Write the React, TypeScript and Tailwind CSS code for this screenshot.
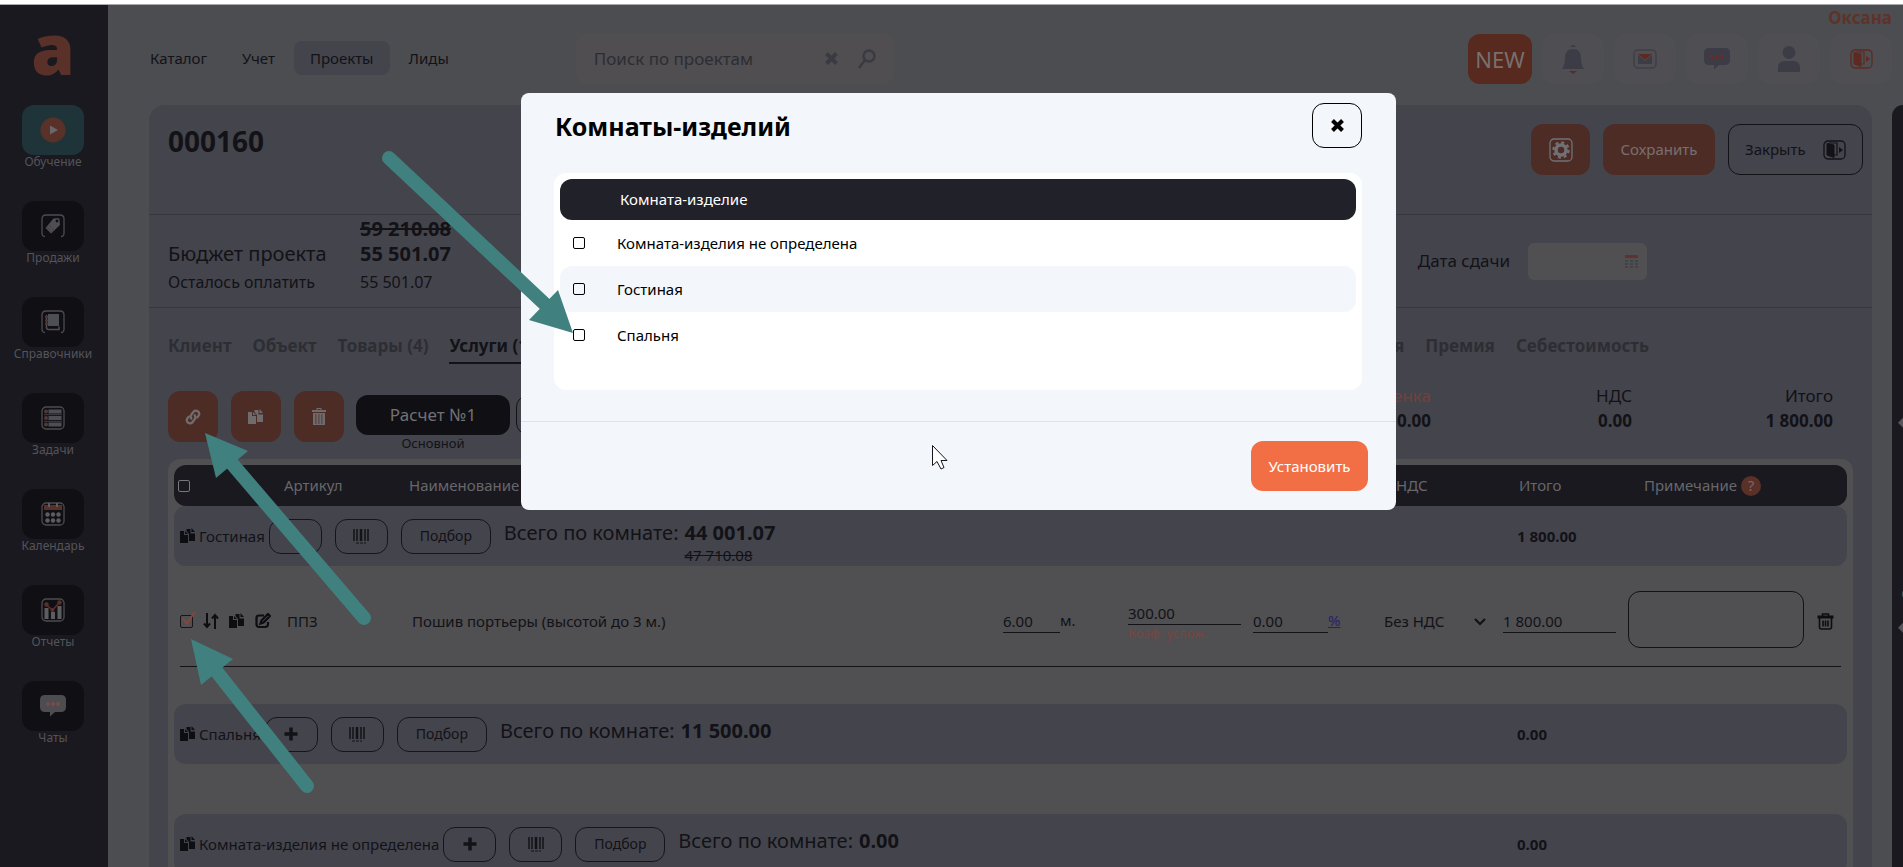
import type { ReactNode } from "react";

type RoomRowProps = {
  id: string;
  name: string;
  sum: string;
  oldSum?: string;
  total: string;
};

const tabsLeft = ["Клиент", "Объект", "Товары (4)"];
const tabsRight = ["Рекламация", "Премия", "Себестоимость"];
const rooms = ["Комната-изделия не определена", "Гостиная", "Спальня"];

function Frame({ children, className }: { children: ReactNode; className?: string }) {
  return (
    <svg width="24" height="24" viewBox="0 0 24 24" fill="none" className={className}>
      <rect x="1" y="1" width="22" height="22" rx="4" stroke="#4c4c50" strokeWidth="1.3" />
      {children}
    </svg>
  );
}

function PlayIcon() {
  return (
    <svg width="26" height="26" viewBox="0 0 26 26">
      <circle cx="13" cy="13" r="12.5" fill="#5a3129" />
      <path d="M10 8.5v9l8-4.5z" fill="#68686c" />
    </svg>
  );
}

function TagIcon() {
  return (
    <svg width="24" height="24" viewBox="0 0 24 24" fill="none">
      <path d="M4 22.5Q1 22.5 1 19V5Q1 1 5 1h14q4 0 4 4v14q0 3.500-3 3.500" stroke="#4c4c50" strokeWidth="1.300" />
      <path d="M12.500 4.500 17.500 4l1 1.500.5 5.500-9 8.500L4.500 14z" fill="#4e4e56" />
      <path d="m6 13 5 5.500M8 11l5 5.500" stroke="#503a3a" strokeWidth="1" />
      <circle cx="16" cy="7" r="1.400" fill="#101014" />
    </svg>
  );
}

function BookIcon() {
  return (
    <svg width="24" height="24" viewBox="0 0 24 24" fill="none">
      <path d="M4 22.500Q1 22.500 1 19V5Q1 1 5 1h14q4 0 4 4v14q0 3.500-3 3.500" stroke="#4c4c50" strokeWidth="1.300" />
      <path d="M7 4h11v12H7z" fill="#4e4e56" />
      <path d="M5.500 5v12.500q0 2 2 2H18V16.500" stroke="#4e4e56" strokeWidth="1.500" />
      <path d="M4 7h3M4 10.500h3M4 14h3" stroke="#5a3129" strokeWidth="2" />
    </svg>
  );
}

function TasksIcon() {
  return (
    <Frame>
      <path d="M7.500 3.500h13v4h-13zM7.500 10h13v4h-13zM7.500 16.500h13v4h-13z" fill="#4e4e56" />
      <path d="M3 8.700h18M3 15.300h18" stroke="#4c4c50" strokeWidth=".8" />
      <g fill="#503a3a">
        <circle cx="5" cy="5.500" r="2" /><circle cx="5" cy="12" r="2" /><circle cx="5" cy="18.500" r="2" />
      </g>
    </Frame>
  );
}

function CalendarIcon() {
  return (
    <Frame>
      <path d="M3 3h18v5H3z" fill="#5a3129" />
      <path d="M8 1v4M16 1v4" stroke="#5c5c62" strokeWidth="2" />
      <g fill="#5c5c62">
        <circle cx="6.500" cy="12.500" r="2.200" /><circle cx="12" cy="12.500" r="2.200" /><circle cx="17.500" cy="12.500" r="2.200" />
        <circle cx="6.500" cy="18.500" r="2.200" /><circle cx="12" cy="18.500" r="2.200" /><circle cx="17.500" cy="18.500" r="2.200" />
      </g>
    </Frame>
  );
}

function ReportsIcon() {
  return (
    <Frame>
      <path d="M3.500 10h4v11h-4zM10 14h4v7h-4zM16.500 8h4v13h-4z" fill="#5c5c62" />
      <path d="m5.500 7 6 5 6.500-7" stroke="#5a3129" strokeWidth="1.500" />
      <g fill="#5a3129">
        <circle cx="5.500" cy="6.500" r="2.200" /><circle cx="11.500" cy="12" r="2" /><circle cx="18.500" cy="4.500" r="2.200" />
      </g>
    </Frame>
  );
}

function ChatIcon({ body, dots }: { body: string; dots: string }) {
  return (
    <svg width="26" height="22" viewBox="0 0 26 22">
      <path d="M5 0h16q5 0 5 5v7q0 5-5 5h-6l-5 4.500V17H5q-5 0-5-5V5q0-5 5-5z" fill={body} />
      <g fill={dots}>
        <circle cx="8" cy="9" r="1.900" /><circle cx="13" cy="9" r="1.900" /><circle cx="18" cy="9" r="1.900" />
      </g>
    </svg>
  );
}

function CopyIcon() {
  return (
    <svg width="16" height="16" viewBox="0 0 16 16" fill="currentColor" className="shrink-0">
      <path d="M0 3h4v4h4v8H0z" /><path d="M5 3 8 6H5z" />
      <path d="M6.500 1h4v4.500H15V13H9V6L6.500 3z" /><path d="M11.500 0 15 4h-3.500z" />
    </svg>
  );
}

function TrashIcon() {
  return (
    <svg width="17" height="17" viewBox="0 0 17 17" fill="none" stroke="currentColor">
      <path d="M.5 4h16" strokeWidth="3" /><path d="M5.500 3V1h6v2" strokeWidth="1.500" />
      <path d="M2.500 5v9q0 2 2 2h8q2 0 2-2V5M6 7.500v6M8.500 7.500v6M11 7.500v6" strokeWidth="1.600" />
    </svg>
  );
}

function BinIcon() {
  return (
    <svg width="14" height="17" viewBox="0 0 14 17" fill="currentColor">
      <path d="M0 2h4.500V0h5v2H14v2H0zM5.500 1v1h3V1z" fillRule="evenodd" />
      <path d="M1 5h12v12H1zM3.500 6v10h.8V6zm3 0v10h.8V6zm3 0v10h.8V6z" fillRule="evenodd" />
    </svg>
  );
}

function DoorIcon() {
  return (
    <svg width="23" height="20" viewBox="0 0 23 20" fill="none" stroke="currentColor">
      <rect x="1" y="1" width="21" height="18" rx="4" strokeWidth="1.300" />
      <path d="M4 3.500 11 5v12.500L4 15z" fill="currentColor" />
      <path d="M6 3h8v12h-3" strokeWidth="1.200" />
      <path d="M16 7v6l4-3z" fill="currentColor" stroke="none" />
    </svg>
  );
}

function LinkIcon() {
  return (
    <svg width="16" height="16" viewBox="0 0 24 24" fill="none" stroke="currentColor" strokeWidth="3.500" strokeLinecap="round">
      <path d="M9.500 14.500a5 5 0 0 1 0-6l3-4a4.800 4.800 0 0 1 8 5.500l-2 2.500" />
      <path d="M14.500 9.500a5 5 0 0 1 0 6l-3 4a4.800 4.800 0 0 1-8-5.500l2-2.500" />
    </svg>
  );
}

function BarcodeIcon() {
  return (
    <svg width="16" height="16" viewBox="0 0 16 16" stroke="currentColor">
      <path d="M1 1v12M15 1v12" strokeWidth="1.500" /><path d="M4 1v12M12 1v12" strokeWidth="1.500" />
      <path d="M8 1v12" strokeWidth="2.500" /><path d="M3 15h10" strokeWidth="1" strokeDasharray="3 1" />
    </svg>
  );
}

function PlusIcon() {
  return (
    <svg width="14" height="14" viewBox="0 0 14 14" stroke="currentColor" strokeWidth="3.500">
      <path d="M7 .5v13M.5 7h13" />
    </svg>
  );
}

function CrossIcon() {
  return (
    <svg width="13" height="13" viewBox="0 0 13 13" stroke="currentColor" strokeWidth="4">
      <path d="m1.500 1.500 10 10M11.500 1.500l-10 10" />
    </svg>
  );
}

const menu = [
  { label: "Обучение", icon: <PlayIcon />, active: true },
  { label: "Продажи", icon: <TagIcon /> },
  { label: "Справочники", icon: <BookIcon /> },
  { label: "Задачи", icon: <TasksIcon /> },
  { label: "Календарь", icon: <CalendarIcon /> },
  { label: "Отчеты", icon: <ReportsIcon /> },
  { label: "Чаты", icon: <ChatIcon body="#4c4c51" dots="#7a4c47" /> },
];

function Sidebar() {
  return (
    <aside className="flex w-[108px] shrink-0 flex-col items-center bg-[#1a191f] pr-0.5">
      <a href="#" className="h-[100px] font-['Open_Sans'] text-[70px] leading-[86px] font-extrabold text-[#5a3129]">
        a
      </a>
      <nav className="flex flex-col">
        {menu.map((item) => (
          <button key={item.label} className="flex h-24 flex-col items-center text-xs leading-3.5 text-[#545459]">
            <span
              className={`flex h-[50px] w-[62px] items-center justify-center rounded-xl ${
                item.active ? "bg-[#1f3438]" : "bg-[#101014]"
              }`}
            >
              {item.icon}
            </span>
            {item.label}
          </button>
        ))}
      </nav>
    </aside>
  );
}

function HeaderButton({ label, children }: { label: string; children: ReactNode }) {
  return (
    <button aria-label={label} className="flex h-[50px] w-[62px] items-center justify-center rounded-xl bg-[#4f4e52]">
      {children}
    </button>
  );
}

function Header() {
  return (
    <header className="flex h-[100px] items-start pr-[11px] pl-[26px]">
      <nav className="mt-9 flex gap-[3px] text-[15px] leading-[34px] text-[#121217]">
        <a href="#" className="px-4">Каталог</a>
        <a href="#" className="px-4">Учет</a>
        <a href="#" className="rounded-lg bg-[#44444c] px-4">Проекты</a>
        <a href="#" className="px-4">Лиды</a>
      </nav>
      <div className="mt-7 ml-[111px] flex h-[51px] w-[318px] items-center rounded-xl bg-[#504e51] px-[18px] text-[#3a3b42]">
        <input
          aria-label="Поиск по проектам"
          placeholder="Поиск по проектам"
          className="min-w-0 flex-1 text-[17px] text-[#2c2d32] outline-none placeholder:text-[#2c2d32]"
        />
        <button aria-label="Очистить" className="mr-5"><CrossIcon /></button>
        <button aria-label="Найти">
          <svg width="18" height="20" viewBox="0 0 18 20" fill="none" stroke="currentColor" strokeWidth="2.500">
            <circle cx="11" cy="7" r="5.500" /><path d="m7 11-6 8" />
          </svg>
        </button>
      </div>
      <div className="ml-auto">
        <p className="h-[29px] pt-[3px] text-right text-[17px] leading-[20px] font-bold text-[#5d332a]">Оксана</p>
        <div className="flex gap-2.5">
          <button className="h-[50px] w-16 rounded-xl bg-[#57291f] text-[22px] text-[#77706f]">NEW</button>
          <HeaderButton label="Уведомления">
            <svg width="22" height="30" viewBox="0 0 22 30" fill="#3c3c47">
              <path d="M8 3q3-4 6 0zM0 25q3-4 3-11 0-9 8-9t8 9q0 7 3 11z" /><path d="M7 27h8l-4 3z" fill="#5d2a23" />
            </svg>
          </HeaderButton>
          <HeaderButton label="Почта">
            <svg width="24" height="20" viewBox="0 0 24 20" fill="none">
              <rect x="1" y="1" width="22" height="18" rx="4" stroke="#403f48" strokeWidth="1.500" />
              <path d="M5 6v9h14V6l-7 6z" fill="#3c3c47" /><path d="M5 5h14l-7 6z" fill="#5d2a23" />
            </svg>
          </HeaderButton>
          <HeaderButton label="Чат"><ChatIcon body="#3c3c47" dots="#6b2c26" /></HeaderButton>
          <HeaderButton label="Профиль">
            <svg width="22" height="26" viewBox="0 0 22 26" fill="#3c3c47">
              <circle cx="11" cy="6.500" r="6.500" /><path d="M0 26v-4q0-7 7-7h8q7 0 7 7v4z" />
            </svg>
          </HeaderButton>
          <button aria-label="Выход" className="flex h-[50px] w-[62px] items-center justify-center rounded-xl bg-[#4f4e52] text-[#5d2a23]">
            <DoorIcon />
          </button>
        </div>
      </div>
    </header>
  );
}

function Total({ label, value, accent }: { label: string; value: string; accent?: boolean }) {
  return (
    <div className="w-[201px] text-right text-[17px] leading-[25px]">
      <p className={accent ? "text-[#73403c]" : ""}>{label}</p>
      <p className="font-bold">{value}</p>
    </div>
  );
}

function RoomRow({ id, name, sum, oldSum, total }: RoomRowProps) {
  return (
    <tr className="h-[60px]">
      <td colSpan={7} className="rounded-l-xl bg-[#44444c] pl-1.5">
        <div className="flex h-[60px] items-center whitespace-nowrap">
          <button aria-label={`Копировать ${name}`} className="mr-[3px] text-[#0d0d12]"><CopyIcon /></button>
          <span id={id}>{name}</span>
          <button aria-label="Добавить" className="ml-1 flex h-[35px] w-[53px] items-center justify-center rounded-xl border border-[#15151b]">
            <PlusIcon />
          </button>
          <button aria-label="Штрихкод" className="ml-[13px] flex h-[35px] w-[53px] items-center justify-center rounded-xl border border-[#15151b]">
            <BarcodeIcon />
          </button>
          <button className="ml-[13px] h-[35px] w-[90px] rounded-xl border border-[#15151b] text-sm">Подбор</button>
          <span className="ml-[13px] self-start pt-[13px] text-xl leading-7">Всего по комнате:</span>
          <span className="ml-1.5 flex flex-col self-start pt-[13px]">
            <b className="text-xl leading-7">{sum}</b>
            {oldSum && <s className="leading-4">{oldSum}</s>}
          </span>
        </div>
      </td>
      <td className="bg-[#44444c] pl-3.5 font-bold">{total}</td>
      <td className="rounded-r-xl bg-[#44444c]" />
    </tr>
  );
}

function ServicesTable() {
  return (
    <div className="mx-[19px] mt-2 flex-1 rounded-t-xl bg-[#504f52] p-1.5">
      <table className="w-full table-fixed border-separate border-spacing-0 text-[15px] text-[#121217]">
        <colgroup>
          <col className="w-[110px]" />
          <col className="w-[125px]" />
          <col />
          <col className="w-[125px]" />
          <col className="w-[125px]" />
          <col className="w-[131px]" />
          <col className="w-[119px]" />
          <col className="w-[125px]" />
          <col className="w-[219px]" />
        </colgroup>
        <thead>
          <tr className="h-[41px] text-left text-[#67676b] *:bg-[#1a191f] *:font-normal">
            <th className="rounded-l-xl pl-1">
              <input type="checkbox" aria-label="Выбрать все" className="block size-3 appearance-none rounded-xs border border-[#77777b]" />
            </th>
            <th>Артикул</th>
            <th>Наименование</th>
            <th>Кол-во</th>
            <th>Цена</th>
            <th>Скидка</th>
            <th className="pl-3">НДС</th>
            <th className="pl-4">Итого</th>
            <th className="rounded-r-xl pl-4">
              <span className="flex items-center gap-1">
                Примечание
                <span className="flex size-5 items-center justify-center rounded-full bg-[#5a3129] text-[#80655f]">?</span>
              </span>
            </th>
          </tr>
        </thead>
        <tbody>
          <RoomRow id="living" name="Гостиная" sum="44 001.07" oldSum="47 710.08" total="1 800.00" />
          <tr className="h-[100px] *:pt-2.5">
            <td className="pl-1.5">
              <div className="flex items-center gap-2.5 text-[#0d0d12]">
                <label className="relative flex">
                  <input type="checkbox" defaultChecked aria-label="ППЗ" className="size-[13px] appearance-none rounded-xs border border-[#15151b]" />
                  <svg width="14" height="15" viewBox="0 0 14 15" fill="none" className="absolute -top-1 left-0.5" stroke="#8a4638" strokeWidth="1.800">
                    <path d="M1 7.500 5 13 12.500 1" />
                  </svg>
                </label>
                <button aria-label="Переместить">
                  <svg width="16" height="16" viewBox="0 0 16 16" fill="none" stroke="currentColor" strokeWidth="2">
                    <path d="M4 0v14M1 10.500 4 14l3-3.500M12 16V2M9 5.500 12 2l3 3.500" />
                  </svg>
                </button>
                <button aria-label="Копировать"><CopyIcon /></button>
                <button aria-label="Изменить">
                  <svg width="16" height="16" viewBox="0 0 16 16" fill="none" stroke="currentColor" strokeWidth="2.200">
                    <path d="M9 2.500H4q-2.500 0-2.500 2.500v6q0 3 2.500 3h6q3 0 3-3V9M5.500 10.500l1-3L13 1l2 2-6.500 6.500z" />
                  </svg>
                </button>
              </div>
            </td>
            <td className="pl-[3px]">ППЗ</td>
            <td className="pl-[3px]">Пошив портьеры (высотой до 3 м.)</td>
            <td>
              <div className="flex">
                <input aria-label="Количество" defaultValue="6.00" className="h-6 w-[57px] border-b border-[#121217]" />
                м.
              </div>
            </td>
            <td>
              <input aria-label="Цена" defaultValue="300.00" className="block h-6 w-[113px] border-b border-[#121217]" />
              <span className="block text-[13px] leading-4 text-[#7b4541]">Коэф. услож.</span>
            </td>
            <td>
              <div className="flex">
                <input aria-label="Скидка" defaultValue="0.00" className="h-6 w-[75px] border-b border-[#121217]" />
                <a href="#" className="text-[#25216b] underline">%</a>
              </div>
            </td>
            <td>
              <div className="relative w-[104px]">
                <select aria-label="НДС" className="w-full appearance-none outline-none">
                  <option>Без НДС</option>
                </select>
                <svg width="12" height="8" viewBox="0 0 12 8" fill="none" stroke="currentColor" strokeWidth="2.200" className="pointer-events-none absolute top-2 right-0.5">
                  <path d="m1 1 5 5 5-5" />
                </svg>
              </div>
            </td>
            <td>
              <input aria-label="Итого" defaultValue="1 800.00" className="block h-6 w-[113px] border-b border-[#121217]" />
            </td>
            <td>
              <div className="flex items-center gap-[13px] pb-1">
                <textarea aria-label="Примечание" className="block h-[57px] w-[176px] resize-none rounded-xl border border-[#121217]" />
                <button aria-label="Удалить" className="pt-1 text-[#0d0d12]"><TrashIcon /></button>
              </div>
            </td>
          </tr>
          <tr>
            <td colSpan={9} className="h-[38px] px-1.5 align-top">
              <div className="border-t border-[#121217]" />
            </td>
          </tr>
          <RoomRow id="bedroom" name="Спальня" sum="11 500.00" total="0.00" />
          <tr className="h-[50px]"><td colSpan={9} /></tr>
          <RoomRow id="unset" name="Комната-изделия не определена" sum="0.00" total="0.00" />
        </tbody>
      </table>
    </div>
  );
}

function Project() {
  return (
    <main className="flex min-w-0 flex-1 flex-col overflow-hidden rounded-t-2xl bg-[#44444c] text-[#121217]">
      <section className="flex h-[110px] shrink-0 items-start justify-between border-b border-[#37373e] pr-[9px] pl-[19px]">
        <h1 className="pt-4 text-[28px] leading-10 font-bold">000160</h1>
        <div className="flex gap-[13px] pt-[19px] text-[15px]">
          <button aria-label="Настройки" className="flex h-[51px] w-[59px] items-center justify-center rounded-xl bg-[#4e2c26]">
            <svg width="24" height="24" viewBox="0 0 24 24" fill="none" stroke="#717074">
              <rect x="1" y="1" width="22" height="22" rx="4" strokeWidth="1.300" />
              <circle cx="12" cy="12" r="5" strokeWidth="3.500" />
              <circle cx="12" cy="12" r="7.500" strokeWidth="2.500" strokeDasharray="3 2.890" />
            </svg>
          </button>
          <button className="h-[51px] w-28 rounded-xl bg-[#4e2c26] text-[#77706f]">Сохранить</button>
          <button className="flex h-[51px] w-[135px] items-center justify-between rounded-xl border border-[#121217] px-4">
            Закрыть
            <DoorIcon />
          </button>
        </div>
      </section>

      <section className="flex h-[93px] shrink-0 justify-between border-b border-[#37373e] pr-[225px] pl-[19px]">
        <div className="grid grid-cols-[192px_auto] content-start pt-px text-xl leading-[25px]">
          <s className="col-start-2 font-bold">59 210.08</s>
          <span>Бюджет проекта</span>
          <b>55 501.07</b>
          <span className="text-base leading-8">Осталось оплатить</span>
          <span className="text-base leading-8">55 501.07</span>
        </div>
        <label className="flex h-[92px] items-center gap-[18px] text-[17px]">
          Дата сдачи
          <span className="flex h-[37px] w-[119px] items-center rounded-md bg-[#504f52] pr-2">
            <input className="w-full min-w-0 outline-none" />
            <svg width="15" height="15" viewBox="0 0 15 15" fill="#42424b" className="shrink-0">
              <path d="M1 1h13v3H1z" fill="#5d332a" />
              <path d="M1 6h3v2H1zM6 6h3v2H6zM11 6h3v2h-3zM1 9h3v2H1zM6 9h3v2H6zM11 9h3v2h-3zM1 12h3v2H1zM6 12h3v2H6zM11 12h3v2h-3z" />
            </svg>
          </span>
        </label>
      </section>

      <nav className="flex shrink-0 gap-[21px] pt-[22px] pr-[223px] pl-[19px] text-[17px] leading-8 font-bold text-[#2d2e34]">
        {tabsLeft.map((tab) => <a key={tab} href="#">{tab}</a>)}
        <a href="#" className="border-b-2 border-[#121217] text-[#121217]">Услуги (1)</a>
        <span className="flex-1" />
        {tabsRight.map((tab) => <a key={tab} href="#">{tab}</a>)}
      </nav>

      <section className="flex shrink-0 items-start pt-[19px] pr-[39px] pl-[19px]">
        <div className="mt-2 flex gap-[13px] text-[#706b6c]">
          <button aria-label="Связать" className="flex h-[51px] w-[50px] items-center justify-center rounded-xl bg-[#4e2c26]"><LinkIcon /></button>
          <button aria-label="Копировать" className="flex h-[51px] w-[50px] items-center justify-center rounded-xl bg-[#4e2c26]"><CopyIcon /></button>
          <button aria-label="Удалить" className="flex h-[51px] w-[50px] items-center justify-center rounded-xl bg-[#4e2c26]"><BinIcon /></button>
        </div>
        <div className="ml-3 pt-3 text-center">
          <button className="block h-10 w-[154px] rounded-xl bg-[#101014] text-[17px] text-[#717074]">Расчет №1</button>
          <span className="block text-[13px] leading-4">Основной</span>
        </div>
        <button aria-label="Добавить расчет" className="mt-3 ml-1.5 flex h-10 w-[53px] items-center justify-center rounded-xl border border-[#121217]">
          <PlusIcon />
        </button>
        <div className="ml-auto flex">
          <Total label="Наценка" value="0.00" accent />
          <Total label="НДС" value="0.00" />
          <Total label="Итого" value="1 800.00" />
        </div>
      </section>

      <ServicesTable />
    </main>
  );
}

function RoomsDialog() {
  return (
    <div className="fixed inset-0 flex items-start justify-center pt-[93px] pl-[14px]">
      <div role="dialog" aria-labelledby="dialog-title" className="w-full max-w-[875px] rounded-lg bg-[#f3f6fb] text-black">
        <div className="flex h-20 items-start justify-between px-[34px] pt-2.5">
          <h2 id="dialog-title" className="text-[25px] leading-[46px] font-bold">Комнаты-изделий</h2>
          <button aria-label="Закрыть" className="flex h-[45px] w-[50px] items-center justify-center rounded-xl border border-black">
            <CrossIcon />
          </button>
        </div>
        <div className="mr-[34px] ml-[33px] rounded-xl bg-white px-1.5 pt-1.5 pb-8">
          <table className="w-full border-separate border-spacing-0 text-left text-[15px]">
            <thead>
              <tr className="h-[41px] text-white">
                <th className="w-[57px] rounded-l-xl bg-[#212129]" />
                <th className="rounded-r-xl bg-[#212129] pl-[3px] font-normal">Комната-изделие</th>
              </tr>
            </thead>
            <tbody>
              {rooms.map((room, i) => (
                <tr key={room} className="h-[46px]">
                  <td className={`rounded-l-xl pl-[13px] ${i % 2 ? "bg-[#f3f6fb]" : "bg-white"}`}>
                    <input type="checkbox" id={`room-${i}`} className="block size-3 appearance-none rounded-xs border border-black" />
                  </td>
                  <td className={`rounded-r-xl ${i % 2 ? "bg-[#f3f6fb]" : "bg-white"}`}>
                    <label htmlFor={`room-${i}`}>{room}</label>
                  </td>
                </tr>
              ))}
            </tbody>
          </table>
        </div>
        <div className="mt-[31px] flex justify-end border-t border-[#dfe3e8] px-7 py-[19px]">
          <button className="h-[50px] w-[117px] rounded-xl bg-[#f26f46] text-[15px] text-white">Установить</button>
        </div>
      </div>
    </div>
  );
}

// teal guide arrows and the mouse pointer, drawn over everything
function Pointers() {
  return (
    <svg className="pointer-events-none fixed top-0 left-0" width="1400" height="867" viewBox="0 0 1400 867">
      <g stroke="#40807e" strokeWidth="14" strokeLinecap="round">
        <path d="M389 158 549 308" />
        <path d="M364 618 228 459" />
        <path d="M307 786 213 667" />
      </g>
      <g fill="#40807e">
        <path d="M573 333 529 320 558 290z" />
        <path d="M205 433 248 451 216 478z" />
        <path d="M191 639 233 659 201 685z" />
      </g>
      <path d="M932.500 445.500v20l4.500-4 4 7.500 3-1.500-3-7h6z" fill="#fff" stroke="#15151b" />
    </svg>
  );
}

export default function App() {
  return (
    <div className="flex h-screen flex-col overflow-hidden border-t-4 border-white bg-[#4c4d51] font-['Noto_Sans',sans-serif]">
      <div className="flex min-h-0 flex-1 border-t border-[#a9a9ab]">
        <Sidebar />
        <div className="flex min-w-0 flex-1 flex-col">
          <Header />
          <div className="flex min-h-0 flex-1 pl-[41px]">
            <Project />
            <aside className="ml-5 flex w-[11px] items-start overflow-hidden rounded-tl-xl bg-[#1a191f] pt-[312px] pl-1.5 text-[15px] leading-4 text-[#57575b]">
              <button className="flex shrink-0 rotate-180 items-start gap-6 whitespace-nowrap [writing-mode:vertical-rl]">
                <svg width="12" height="12" viewBox="0 0 12 12" fill="currentColor"><path d="M12 6 6 0 0 6l6 6z" /></svg>
                Заметки по проекту
                <svg width="12" height="12" viewBox="0 0 12 12" fill="currentColor"><path d="M12 6 6 0 0 6l6 6z" /></svg>
              </button>
            </aside>
          </div>
        </div>
      </div>
      <RoomsDialog />
      <Pointers />
    </div>
  );
}
